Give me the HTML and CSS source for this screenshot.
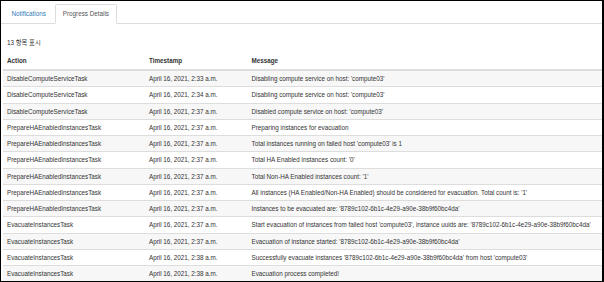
FILE: index.html
```html
<!DOCTYPE html>
<html lang="ko">
<head>
<meta charset="utf-8">
<title>Progress Details</title>
<link rel="stylesheet" href="styles.css">
</head>
<body>
<div class="frame">
  <ul class="tabs">
    <li class="tab"><a class="tab-link">Notifications</a></li>
    <li class="tab active"><a class="tab-link">Progress Details</a></li>
  </ul>
  <div class="pane">
    <div class="count">13 항목 표시</div>
    <table class="grid">
      <colgroup>
        <col class="c-action">
        <col class="c-time">
        <col class="c-msg">
      </colgroup>
      <thead>
        <tr><th>Action</th><th>Timestamp</th><th>Message</th></tr>
      </thead>
      <tbody>
        <tr><td>DisableComputeServiceTask</td><td>April 16, 2021, 2:33 a.m.</td><td>Disabling compute service on host: 'compute03'</td></tr>
        <tr><td>DisableComputeServiceTask</td><td>April 16, 2021, 2:34 a.m.</td><td>Disabling compute service on host: 'compute03'</td></tr>
        <tr><td>DisableComputeServiceTask</td><td>April 16, 2021, 2:37 a.m.</td><td>Disabled compute service on host: 'compute03'</td></tr>
        <tr><td>PrepareHAEnabledInstancesTask</td><td>April 16, 2021, 2:37 a.m.</td><td>Preparing instances for evacuation</td></tr>
        <tr><td>PrepareHAEnabledInstancesTask</td><td>April 16, 2021, 2:37 a.m.</td><td>Total instances running on failed host 'compute03' is 1</td></tr>
        <tr><td>PrepareHAEnabledInstancesTask</td><td>April 16, 2021, 2:37 a.m.</td><td>Total HA Enabled instances count: '0'</td></tr>
        <tr><td>PrepareHAEnabledInstancesTask</td><td>April 16, 2021, 2:37 a.m.</td><td>Total Non-HA Enabled instances count: '1'</td></tr>
        <tr><td>PrepareHAEnabledInstancesTask</td><td>April 16, 2021, 2:37 a.m.</td><td>All instances (HA Enabled/Non-HA Enabled) should be considered for evacuation. Total count is: '1'</td></tr>
        <tr><td>PrepareHAEnabledInstancesTask</td><td>April 16, 2021, 2:37 a.m.</td><td>Instances to be evacuated are: '8789c102-6b1c-4e29-a90e-38b9f60bc4da'</td></tr>
        <tr><td>EvacuateInstancesTask</td><td>April 16, 2021, 2:37 a.m.</td><td>Start evacuation of instances from failed host 'compute03', instance uuids are: '8789c102-6b1c-4e29-a90e-38b9f60bc4da'</td></tr>
        <tr><td>EvacuateInstancesTask</td><td>April 16, 2021, 2:37 a.m.</td><td>Evacuation of instance started: '8789c102-6b1c-4e29-a90e-38b9f60bc4da'</td></tr>
        <tr><td>EvacuateInstancesTask</td><td>April 16, 2021, 2:38 a.m.</td><td>Successfully evacuate instances '8789c102-6b1c-4e29-a90e-38b9f60bc4da' from host 'compute03'</td></tr>
        <tr><td>EvacuateInstancesTask</td><td>April 16, 2021, 2:38 a.m.</td><td>Evacuation process completed!</td></tr>
      </tbody>
    </table>
  </div>
</div>
</body>
</html>
```
FILE: styles.css
```css
html, body {
  margin: 0;
  padding: 0;
  background: #fff;
}
body {
  font-family: "Liberation Sans", Arial, "Noto Sans CJK KR", sans-serif;
  font-size: 6.3px;
  color: #333;
}
.frame {
  box-sizing: border-box;
  width: 604px;
  height: 282px;
  border-top: 1px solid #000;
  border-left: 1px solid #000;
  border-right: 2px solid #000;
  border-bottom: 1px solid #000;
  overflow: hidden;
  background: #fff;
}
.tabs {
  display: flex;
  list-style: none;
  margin: 0;
  padding: 3px 0 0 3px;
  border-bottom: 1px solid #ddd;
}
.tab {
  margin-right: 2px;
  margin-bottom: -1px;
}
.tab-link {
  display: block;
  padding: 0 6.5px;
  line-height: 18px;
  border: 1px solid transparent;
  border-radius: 2px 2px 0 0;
  color: #337ab7;
}
.tab.active .tab-link {
  color: #555;
  background: #fff;
  border-color: #ddd #ddd transparent;
}
.pane {
  padding: 0 0 0 2px;
}
.count {
  margin: 14px 0 0 4px;
  line-height: 10px;
  color: #333;
}
.grid {
  margin-top: 4px;
  width: 100%;
  table-layout: fixed;
  border-collapse: separate;
  border-spacing: 0;
}
.c-action { width: 142px; }
.c-time { width: 102.5px; }
.grid th,
.grid td {
  text-align: left;
  white-space: nowrap;
  overflow: hidden;
  padding: 3px 4px;
  line-height: 9.25px;
}
.grid th {
  font-weight: bold;
  border-bottom: 2px solid #ddd;
  padding-top: 4px;
  padding-bottom: 3.75px;
}
.grid td {
  border-top: 1px solid #ddd;
}
.grid tbody tr:first-child td {
  border-top: 0;
}
.grid tbody tr:nth-child(odd) {
  background: #f7f7f7;
}
```
